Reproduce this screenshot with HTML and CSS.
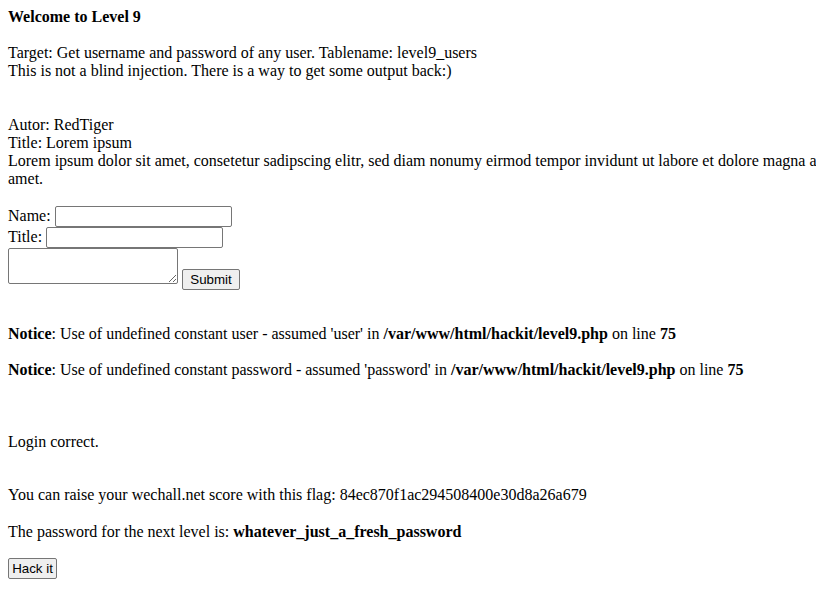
FILE: index.html
```html
<!DOCTYPE html>
<html>
<head>
<meta charset="utf-8">
<link rel="stylesheet" href="styles.css">
</head>
<body>
<div class="page">
  <div class="heading"><b>Welcome to Level 9</b></div>
  <div class="target">
    <div>Target: Get username and password of any user. Tablename: level9_users</div>
    <div>This is not a blind injection. There is a way to get some output back:)</div>
  </div>
  <div class="article">
    <div>Autor: RedTiger</div>
    <div>Title: Lorem ipsum</div>
    <div class="clip">Lorem ipsum dolor sit amet, consetetur sadipscing elitr, sed diam nonumy eirmod tempor invidunt ut labore et dolore magna aliquyam erat, sed diam voluptua. At vero eos et accusam et justo duo dolores et ea rebum. Stet clita kasd gubergren, no sea takimata sanctus est Lorem ipsum dolor sit</div>
    <div>amet.</div>
  </div>
  <form class="post-form" onsubmit="return false">
    <div class="row">Name: <input class="field" type="text" name="autor"></div>
    <div class="row">Title: <input class="field" type="text" name="title"></div>
    <div class="row"><textarea class="area" name="text"></textarea> <input class="btn btn-submit" type="submit" value="Submit"></div>
  </form>
  <div class="notices">
    <div class="notice"><b>Notice</b>: Use of undefined constant user - assumed 'user' in <b>/var/www/html/hackit/level9.php</b> on line <b>75</b></div>
    <div class="notice"><b>Notice</b>: Use of undefined constant password - assumed 'password' in <b>/var/www/html/hackit/level9.php</b> on line <b>75</b></div>
  </div>
  <div class="result">Login correct.</div>
  <div class="flag">You can raise your wechall.net score with this flag: 84ec870f1ac294508400e30d8a26a679</div>
  <div class="next">The password for the next level is: <b>whatever_just_a_fresh_password</b></div>
  <div class="hack"><button class="btn btn-hack" type="button">Hack it</button></div>
</div>
</body>
</html>
```
FILE: styles.css
```css
html, body {
  margin: 0;
  padding: 0;
  background: #fff;
}
body {
  overflow: hidden;
}
.page {
  padding: 8px;
  font-family: "Liberation Serif", "Times New Roman", serif;
  font-size: 16px;
  line-height: 18px;
  color: #000;
}
.target {
  margin-top: 18px;
}
.article {
  margin-top: 36px;
}
.clip {
  white-space: nowrap;
  overflow: hidden;
  margin-right: -8px;
}
.post-form {
  margin: 18px 0 0 0;
}
.row {
  line-height: 18px;
}
.field {
  box-sizing: border-box;
  width: 177px;
  height: 21px;
  padding: 1px 2px;
  border: 1px solid #767676;
  border-radius: 2px;
  font-family: "Liberation Sans", Arial, sans-serif;
  font-size: 13.333px;
  margin: 0;
  vertical-align: baseline;
}
.area {
  box-sizing: border-box;
  width: 170px;
  height: 36px;
  padding: 2px;
  border: 1px solid #767676;
  border-radius: 2px;
  font-family: "Liberation Mono", monospace;
  font-size: 13.333px;
  margin: 0;
  resize: both;
  vertical-align: baseline;
}
.btn {
  box-sizing: border-box;
  height: 21px;
  padding: 0;
  border: 1px solid #767676;
  border-radius: 2px;
  background: #efefef;
  color: #000;
  font-family: "Liberation Sans", Arial, sans-serif;
  font-size: 13.333px;
  line-height: 17px;
  text-align: center;
  white-space: nowrap;
  margin: 0;
}
.btn-submit {
  width: 58px;
}
.btn-hack {
  width: 49px;
}
.notices {
  margin-top: 35px;
}
.notice + .notice {
  margin-top: 18px;
}
.result {
  margin-top: 54px;
}
.flag {
  margin-top: 35px;
}
.next {
  margin-top: 19px;
}
.hack {
  margin-top: 17px;
}
```
